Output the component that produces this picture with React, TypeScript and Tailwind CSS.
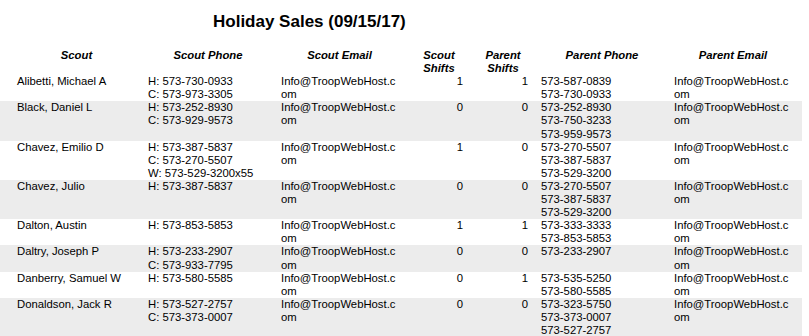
import React from 'react'

type Row = {
  scout: string
  phones: string[]
  scoutShifts: number
  parentShifts: number
  parentPhones: string[]
}

const EMAIL = 'Info@TroopWebHost.com'

const ROWS: Row[] = [
  { scout: 'Alibetti, Michael A', phones: ['H: 573-730-0933', 'C: 573-973-3305'], scoutShifts: 1, parentShifts: 1, parentPhones: ['573-587-0839', '573-730-0933'] },
  { scout: 'Black, Daniel L', phones: ['H: 573-252-8930', 'C: 573-929-9573'], scoutShifts: 0, parentShifts: 0, parentPhones: ['573-252-8930', '573-750-3233', '573-959-9573'] },
  { scout: 'Chavez, Emilio D', phones: ['H: 573-387-5837', 'C: 573-270-5507', 'W: 573-529-3200x55'], scoutShifts: 1, parentShifts: 0, parentPhones: ['573-270-5507', '573-387-5837', '573-529-3200'] },
  { scout: 'Chavez, Julio', phones: ['H: 573-387-5837'], scoutShifts: 0, parentShifts: 0, parentPhones: ['573-270-5507', '573-387-5837', '573-529-3200'] },
  { scout: 'Dalton, Austin', phones: ['H: 573-853-5853'], scoutShifts: 1, parentShifts: 1, parentPhones: ['573-333-3333', '573-853-5853'] },
  { scout: 'Daltry, Joseph P', phones: ['H: 573-233-2907', 'C: 573-933-7795'], scoutShifts: 0, parentShifts: 0, parentPhones: ['573-233-2907'] },
  { scout: 'Danberry, Samuel W', phones: ['H: 573-580-5585'], scoutShifts: 0, parentShifts: 1, parentPhones: ['573-535-5250', '573-580-5585'] },
  { scout: 'Donaldson, Jack R', phones: ['H: 573-527-2757', 'C: 573-373-0007'], scoutShifts: 0, parentShifts: 0, parentPhones: ['573-323-5750', '573-373-0007', '573-527-2757'] },
]

// column widths: each one runs from its text start to the next column's text start
const GRID = 'grid grid-cols-[131px_133px_134px_63px_63px_133px_130px]'

function Lines({ items }: { items: string[] }) {
  return (
    <div>
      {items.map((l, i) => (
        <div key={i} className="whitespace-nowrap">{l}</div>
      ))}
    </div>
  )
}

export default function App() {
  return (
    <div
      className="w-[809px] h-[336px] overflow-hidden bg-white text-black"
      style={{ fontFamily: '"Liberation Sans", Arial, sans-serif' }}
    >
      {/* Titre */}
      <div className="pt-[12px] pl-[213px] text-[17px] leading-[20px] font-bold">
        Holiday Sales (09/15/17)
      </div>

      {/* En-têtes */}
      <div className={`${GRID} mt-[17px] pl-[17px] text-[11.3px] leading-[13.1px] font-bold italic`}>
        <div className="w-[119px] text-center">Scout</div>
        <div className="w-[120px] text-center">Scout Phone</div>
        <div className="w-[117px] text-center">Scout Email</div>
        <div className="w-[48px] text-center">Scout Shifts</div>
        <div className="w-[50px] text-center">Parent Shifts</div>
        <div className="w-[122px] text-center">Parent Phone</div>
        <div className="w-[118px] text-center">Parent Email</div>
      </div>

      {/* Lignes */}
      <div className="w-[802px] text-[11.3px] leading-[13.1px]">
        {ROWS.map((r, i) => (
          <div key={r.scout} className={`${GRID} pl-[17px] ${i % 2 === 1 ? 'bg-[#ececec]' : 'bg-white'}`}>
            <div className="w-[119px] whitespace-nowrap">{r.scout}</div>
            <div className="w-[120px]"><Lines items={r.phones} /></div>
            <div className="w-[117px] break-all">{EMAIL}</div>
            <div className="w-[48px] text-right">{r.scoutShifts}</div>
            <div className="w-[50px] text-right">{r.parentShifts}</div>
            <div className="w-[122px]"><Lines items={r.parentPhones} /></div>
            <div className="w-[118px] break-all">{EMAIL}</div>
          </div>
        ))}
      </div>
    </div>
  )
}
